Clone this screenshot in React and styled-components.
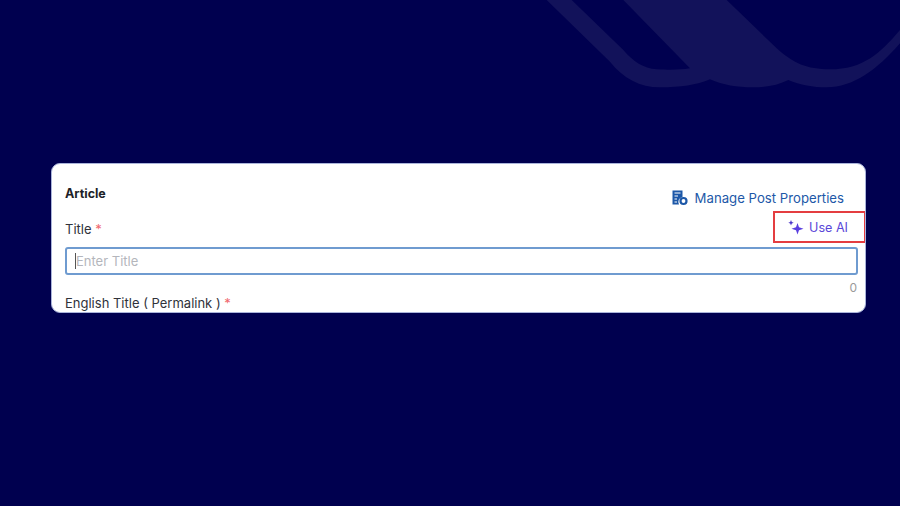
import React from 'react';
import styled, { createGlobalStyle } from 'styled-components';

const GlobalStyle = createGlobalStyle`
  html, body {
    margin: 0;
    height: 100%;
    background: #00004f;
  }
  body {
    font-family: 'Inter', 'Liberation Sans', sans-serif;
  }
`;

const Page = styled.div`
  position: relative;
  width: 900px;
  height: 506px;
  overflow: hidden;
  background: #00004f;
  padding: 163px 34px 0 51px;
  box-sizing: border-box;
`;

const Watermark = styled.svg`
  position: absolute;
  top: 0;
  left: 530px;
  width: 370px;
  height: 100px;
`;

const Card = styled.section`
  position: relative;
  height: 150px;
  box-sizing: border-box;
  background: #fff;
  border: 1px solid #aab4da;
  border-radius: 9px;
  padding: 0 7px 0 13px;
  overflow: hidden;
`;

const HeaderRow = styled.div`
  display: flex;
  justify-content: space-between;
  height: 47px;
`;

const CardTitle = styled.h2`
  margin: 22px 0 0 0;
  font-size: 12.5px;
  line-height: 16px;
  font-weight: 700;
  color: #1d1f27;
`;

const ManageLink = styled.a`
  display: flex;
  align-items: center;
  gap: 7px;
  height: 20px;
  margin: 24px 14px 0 0;
  font-size: 13.2px;
  color: #1d58a8;
`;

const LabelRow = styled.div`
  height: 36px;
  padding-top: 10px;
  box-sizing: border-box;
`;

const Label = styled.label`
  display: block;
  font-size: 13px;
  line-height: 16px;
  color: #30323a;
`;

const Required = styled.span`
  color: #f0686c;
`;

const AiBox = styled.button`
  position: absolute;
  top: 47px;
  right: -1px;
  width: 93px;
  height: 32px;
  box-sizing: border-box;
  display: flex;
  align-items: center;
  justify-content: flex-end;
  gap: 5px;
  padding: 0 16px 0 0;
  background: transparent;
  border: 2px solid #e43d40;
  font: inherit;
  font-size: 12.6px;
  color: #5a47d8;
`;

const TitleInput = styled.div`
  height: 28px;
  box-sizing: border-box;
  border: 2px solid #6f9bd0;
  border-radius: 3px;
  display: flex;
  align-items: center;
  padding-left: 8px;
  font-size: 13px;
  color: #b4b6bc;
`;

const Caret = styled.span`
  width: 1px;
  height: 16px;
  background: #555;
`;

const Counter = styled.div`
  text-align: right;
  font-size: 12px;
  line-height: 14px;
  color: #9a9a9a;
  padding-top: 6px;
  padding-right: 1px;
`;

export default function App() {
  return (
    <Page>
      <GlobalStyle />
      <Watermark viewBox="0 0 1110 300">
        <path
          fill="#12125a"
          d="M50 0 L240 185 C280 235 330 262 390 262 C450 262 500 255 540 238 C580 255 620 262 670 262 C710 262 745 255 775 240 C810 255 850 262 890 262 C970 262 1040 210 1110 130 L1110 90 C1050 160 1000 208 900 208 C830 208 790 190 740 145 L590 0 L280 0 L480 205 C450 210 420 210 380 208 C340 205 310 185 280 150 L125 0 Z"
        />
      </Watermark>
      <Card>
        <HeaderRow>
          <CardTitle>Article</CardTitle>
          <ManageLink>
            <svg width="16" height="16" viewBox="0 0 16 16">
              <path d="M0.5 0.5 H10.5 V7 A5 5 0 0 0 7 14.5 H0.5 Z" fill="#1d58a8" />
              <path d="M2.5 3 H8.5 M2.5 6 H6 M2.5 9 H5 M2.5 12 H5" stroke="#ffffff" strokeWidth="1" />
              <circle cx="11.5" cy="11" r="3" fill="none" stroke="#1d58a8" strokeWidth="2.2" />
            </svg>
            Manage Post Properties
          </ManageLink>
        </HeaderRow>
        <LabelRow>
          <Label>Title <Required>*</Required></Label>
        </LabelRow>
        <AiBox>
          <svg width="16" height="16" viewBox="0 0 16 16">
            <path d="M9.5 4 L11 8.2 L15.5 9.7 L11 11.2 L9.5 15.5 L8 11.2 L3.5 9.7 L8 8.2 Z" fill="#5a3fe0" />
            <path d="M3 1 L3.8 2.9 L5.7 3.7 L3.8 4.5 L3 6.4 L2.2 4.5 L0.3 3.7 L2.2 2.9 Z" fill="#4a35c8" />
          </svg>
          Use AI
        </AiBox>
        <TitleInput>
          <Caret />
          Enter Title
        </TitleInput>
        <Counter>0</Counter>
        <Label>English Title ( Permalink ) <Required>*</Required></Label>
      </Card>
    </Page>
  );
}
